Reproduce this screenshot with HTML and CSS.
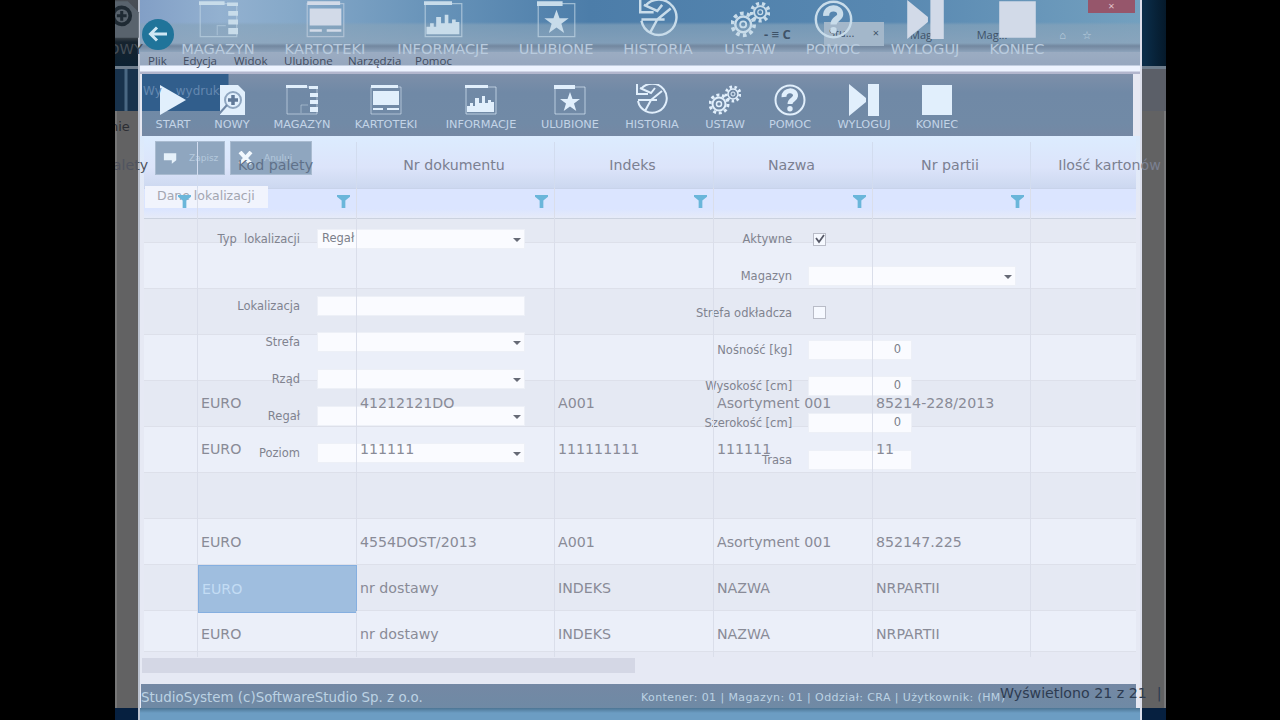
FILE: index.html
```html
<!DOCTYPE html>
<html lang="pl">
<head>
  <meta charset="UTF-8">
  <title>StudioSystem</title>
  <link rel="stylesheet" href="styles.css">
</head>
<body>

<svg class="defs" width="0" height="0">
  <symbol id="start" viewBox="0 0 32 32"><path d="M3 1L29 16L3 31z" fill="currentColor"/></symbol>
  <symbol id="nowy" viewBox="0 0 32 32"><path d="M4 1H22L29 8V31H4z" fill="currentColor"/><circle cx="17" cy="16" r="8" fill="none" stroke="#8fa6c0" stroke-width="2"/><path d="M17 11V21M12 16H22" stroke="#607998" stroke-width="3.500"/><path d="M3 30L11 21" stroke="#7088a6" stroke-width="2"/></symbol>
  <symbol id="nowy-dark" viewBox="0 0 32 32"><path d="M4 1H22L31 10V31H4z" fill="#59636d"/><circle cx="17" cy="13" r="7" fill="none" stroke="#1f2a33" stroke-width="3"/><path d="M17 9V17M13 13H21" stroke="#1f2a33" stroke-width="2.500"/><path d="M2 30L11 20" stroke="#8d969f" stroke-width="2"/></symbol>
  <symbol id="magazyn" viewBox="0 0 32 32"><path d="M1 3H31V30H1z" fill="none" stroke="currentColor" opacity=".55"/><path d="M0 1H21V4H0zM23 2H32V5H23zM24 9H32V13H24zM24 16H32V20H24zM24 23H32V28H24z" fill="currentColor"/><path d="M15 29V21H22" fill="none" stroke="currentColor" opacity=".4"/></symbol>
  <symbol id="kartoteki" viewBox="0 0 32 32"><path d="M1 3H31V30H1z" fill="none" stroke="currentColor" opacity=".55"/><path d="M1 1H28V4H1zM3 7H29V21H3zM3 24H13V26H3zM17 24H29V26H17z" fill="currentColor"/></symbol>
  <symbol id="informacje" viewBox="0 0 32 32"><path d="M1 3H31V30H1z" fill="none" stroke="currentColor" opacity=".65"/><path d="M0 1H23V4H0zM2 28V22H5V19H8V22H10V14H14V19H17V12H20V19H23V16H26V18H29V28z" fill="currentColor"/></symbol>
  <symbol id="ulubione" viewBox="0 0 32 32"><path d="M1 3H31V30H1z" fill="none" stroke="currentColor" opacity=".65"/><path d="M0 1H21V5H0zM16 8L18.500 15H26L20 19.500L22.300 27L16 22.500L9.700 27L12 19.500L6 15H13.500z" fill="currentColor"/></symbol>
  <symbol id="historia" viewBox="0 0 32 32"><path d="M5 5A14.500 14.500 0 1 1 2 17M1 0V10H12M2 16H21M15 16L26 7M15 16L9 27M4 4L15 9L19 4" fill="none" stroke="currentColor" stroke-width="2"/></symbol>
  <symbol id="ustaw" viewBox="0 0 32 32"><g fill="none" stroke="currentColor"><circle cx="10" cy="20" r="9" stroke-width="3" stroke-dasharray="3 2.650"/><circle cx="10" cy="20" r="6.500" stroke-width="2"/><circle cx="10" cy="20" r="2.500" stroke-width="1.500"/><circle cx="24" cy="10" r="7" stroke-width="3" stroke-dasharray="2.500 2.390"/><circle cx="24" cy="10" r="5" stroke-width="1.500"/><circle cx="24" cy="10" r="2"/></g></symbol>
  <symbol id="pomoc" viewBox="0 0 32 32"><circle cx="16" cy="16" r="14.500" fill="none" stroke="currentColor" stroke-width="2"/><path d="M10 13C9.500 5 22 5 21.500 12C21.200 15.500 16 15.500 16 20" fill="none" stroke="currentColor" stroke-width="5"/><circle cx="16" cy="24.800" r="2.700" fill="currentColor"/></symbol>
  <symbol id="wyloguj" viewBox="0 0 32 32"><path d="M1 0L18 14V18L1 32zM20 0H31V32H20z" fill="currentColor"/></symbol>
  <symbol id="koniec" viewBox="0 0 32 32"><path d="M1 1H31V31H1z" fill="currentColor"/></symbol>
  <symbol id="filter" viewBox="0 0 14 14"><path d="M0 0H14V2L9 6V14H5V6L0 2z" fill="currentColor"/></symbol>
</svg>

<div class="screen">

  <!-- tło: okno listy palet -->
  <div class="back">
    <div class="back-top"></div>
    <div class="back-bar"></div>
    <div class="back-body"></div>
    <div class="back-foot"></div>
  </div>

  <!-- okno lokalizacji -->
  <div class="window">
    <div class="titlebar">
      <div class="arrow"><svg width="20" height="16" viewBox="0 0 20 16"><path d="M19 8H3M9 1.500L2.500 8L9 14.500" fill="none" stroke="#cfe7f4" stroke-width="3"/></svg></div>
      <div class="address">- ≡ C</div>
      <div class="tab"><span>Stu...</span><span>×</span></div>
      <div class="tab-next">Mag...</div>
      <div class="tab-next wide">Mag...</div>
      <div class="tools"><span>⌂</span><span>☆</span></div>
      <div class="close">×</div>
    </div>
    <div class="menu">
      <span>Plik</span><span>Edycja</span><span>Widok</span><span>Ulubione</span><span>Narzędzia</span><span>Pomoc</span>
    </div>
    <div class="toolbar">
      <div class="tool"><svg><use href="#start"/></svg>START</div>
      <div class="tool"><svg><use href="#nowy"/></svg>NOWY</div>
      <div class="tool"><svg><use href="#magazyn"/></svg>MAGAZYN</div>
      <div class="tool"><svg><use href="#kartoteki"/></svg>KARTOTEKI</div>
      <div class="tool"><svg><use href="#informacje"/></svg>INFORMACJE</div>
      <div class="tool"><svg><use href="#ulubione"/></svg>ULUBIONE</div>
      <div class="tool"><svg><use href="#historia"/></svg>HISTORIA</div>
      <div class="tool"><svg><use href="#ustaw"/></svg>USTAW</div>
      <div class="tool"><svg><use href="#pomoc"/></svg>POMOC</div>
      <div class="tool"><svg><use href="#wyloguj"/></svg>WYLOGUJ</div>
      <div class="tool"><svg><use href="#koniec"/></svg>KONIEC</div>
    </div>
    <div class="page"></div>
    <div class="status">
      <span class="copy">StudioSystem (c)SoftwareStudio Sp. z o.o.</span>
      <span class="info">Kontener: 01 | Magazyn: 01 | Oddział: CRA | Użytkownik: (HM)</span>
    </div>
    <div class="edge"></div>
  </div>

  <!-- pasy tabeli -->
  <div class="bands">
    <div class="band head"></div>
    <div class="band filters"></div>
    <div class="band r1"></div>
    <div class="band light"></div>
    <div class="band"></div>
    <div class="band light"></div>
    <div class="band"></div>
    <div class="band light"></div>
    <div class="band"></div>
    <div class="band light"></div>
    <div class="band"></div>
    <div class="band light last"></div>
    <div class="scroll"></div>
  </div>

  <!-- formularz -->
  <div class="form">
    <div class="actions">
      <div class="btn"><svg width="15" height="13" viewBox="0 0 17 14"><path d="M1 1H15V9L10 13V9H1z" fill="#e6f1fa"/></svg>Zapisz</div>
      <div class="btn cancel"><svg width="15" height="14" viewBox="0 0 15 14"><path d="M2 1L13 13M13 1L2 13" stroke="#f2f8fd" stroke-width="4"/></svg>Anuluj</div>
    </div>
    <div class="caption">Dane lokalizacji</div>
    <div class="fields">
      <div class="col">
        <div class="row gap"><label>Typ&nbsp; lokalizacji</label><div class="input select">Regał</div></div>
        <div class="row"><label>Lokalizacja</label><div class="input"></div></div>
        <div class="row"><label>Strefa</label><div class="input select"></div></div>
        <div class="row"><label>Rząd</label><div class="input select"></div></div>
        <div class="row"><label>Regał</label><div class="input select"></div></div>
        <div class="row"><label>Poziom</label><div class="input select"></div></div>
      </div>
      <div class="col right">
        <div class="row"><label>Aktywne</label><div class="check"><svg width="10" height="10" viewBox="0 0 10 10"><path d="M1 4L4 8L9 1" fill="none" stroke="#555866" stroke-width="1.800"/></svg></div></div>
        <div class="row"><label>Magazyn</label><div class="input select"></div></div>
        <div class="row"><label>Strefa odkładcza</label><div class="check"></div></div>
        <div class="row"><label>Nośność [kg]</label><div class="input short">0</div></div>
        <div class="row"><label>Wysokość [cm]</label><div class="input short">0</div></div>
        <div class="row"><label>Szerokość [cm]</label><div class="input short">0</div></div>
        <div class="row"><label>Trasa</label><div class="input short"></div></div>
      </div>
    </div>
  </div>

  <!-- lista palet -->
  <div class="list">
    <div class="toolbar big">
      <div class="tool"><svg><use href="#nowy-dark"/></svg>NOWY</div>
      <div class="tool"><svg><use href="#magazyn"/></svg>MAGAZYN</div>
      <div class="tool pale"><svg><use href="#kartoteki"/></svg>KARTOTEKI</div>
      <div class="tool"><svg><use href="#informacje"/></svg>INFORMACJE</div>
      <div class="tool"><svg><use href="#ulubione"/></svg>ULUBIONE</div>
      <div class="tool"><svg><use href="#historia"/></svg>HISTORIA</div>
      <div class="tool"><svg><use href="#ustaw"/></svg>USTAW</div>
      <div class="tool"><svg><use href="#pomoc"/></svg>POMOC</div>
      <div class="tool pale"><svg><use href="#wyloguj"/></svg>WYLOGUJ</div>
      <div class="tool pale"><svg><use href="#koniec"/></svg>KONIEC</div>
    </div>
    <div class="subbar"><span>Wy</span><span>wydruk</span></div>
    <div class="subtitle">nie</div>
    <div class="grid names">
      <div>palety</div><div>Kod palety</div><div>Nr dokumentu</div><div>Indeks</div><div>Nazwa</div><div>Nr partii</div><div>Ilość kartonów</div>
    </div>
    <div class="grid icons">
      <div><svg><use href="#filter"/></svg></div><div><svg><use href="#filter"/></svg></div><div><svg><use href="#filter"/></svg></div><div><svg><use href="#filter"/></svg></div><div><svg><use href="#filter"/></svg></div><div><svg><use href="#filter"/></svg></div><div></div>
    </div>
    <div class="grid empty"><div></div><div></div><div></div><div></div><div></div><div></div><div></div></div>
    <div class="grid"><div></div><div>EURO</div><div>41212121DO</div><div>A001</div><div>Asortyment 001</div><div>85214-228/2013</div><div></div></div>
    <div class="grid"><div></div><div>EURO</div><div>111111</div><div>111111111</div><div>111111</div><div>11</div><div></div></div>
    <div class="grid"><div></div><div></div><div></div><div></div><div></div><div></div><div></div></div>
    <div class="grid"><div></div><div>EURO</div><div>4554DOST/2013</div><div>A001</div><div>Asortyment 001</div><div>852147.225</div><div></div></div>
    <div class="grid"><div></div><div class="selected">EURO</div><div>nr dostawy</div><div>INDEKS</div><div>NAZWA</div><div>NRPARTII</div><div></div></div>
    <div class="grid tail"><div></div><div>EURO</div><div>nr dostawy</div><div>INDEKS</div><div>NAZWA</div><div>NRPARTII</div><div></div></div>
    <div class="count"><span>Wyświetlono 21 z 21</span><span>|</span></div>
  </div>

</div>

</body>
</html>
```

FILE: styles.css
```css
* {
  box-sizing: border-box;
}
body {
  margin: 0;
  background: #000;
  font-family: "DejaVu Sans", Verdana, sans-serif;
}
.defs {
  position: absolute;
}
.screen {
  position: relative;
  width: 1280px;
  height: 720px;
  overflow: hidden;
}

/* back window */
.back {
  position: absolute;
  left: 115px;
  top: 0;
  width: 1051px;
  height: 720px;
  display: flex;
  flex-direction: column;
}
.back-top {
  height: 66px;
  background: linear-gradient(90deg, transparent 50%, #0a2c48 50%, #0a2c48 98%, #05192a),
    linear-gradient(180deg, #4a4f56, #454b52 36px, #16232e 42px, #0d2233);
}
.back-bar {
  height: 45px;
  border-top: 3px solid #6f7e8d;
  background: linear-gradient(90deg, #18324c 9px, #4a6883 10px, #4a6883 12px, #18324c 13px, #18324c 50%, #5b5f68 50%);
}
.back-body {
  flex: 1;
  background: #626263;
  border-left: 2px solid #777;
  border-right: 2px solid #77787a;
}
.back-foot {
  height: 12px;
  background: #062040;
}

/* front window */
.window {
  position: absolute;
  left: 138px;
  top: 0;
  width: 1004px;
  height: 720px;
  display: flex;
  flex-direction: column;
  background: #e6e8f2;
  border-left: 2px solid #bcc3d0;
  border-right: 2px solid #dcdfec;
}
.titlebar {
  position: relative;
  display: flex;
  align-items: center;
  height: 52px;
  padding: 16px 0 0 2px;
  font: 11px "Open Sans", sans-serif;
  color: #3e5268;
  background: linear-gradient(180deg, transparent 22px, #86a3baaa 25px, #8ea6bccc 43px, #72879f 46px, #8da3bb 52px),
    linear-gradient(90deg, #829fc6, #93b1d0 8%, #86a9c9 15%, #6692b8 30%, #4c7da9 45%, #5888b1 75%, #73a0bf);
}
.arrow {
  display: flex;
  align-items: center;
  justify-content: center;
  width: 32px;
  height: 31px;
  border-radius: 50%;
  background: #20749a;
}
.address {
  width: 60px;
  margin-left: 590px;
  font-size: 13px;
  font-weight: bold;
}
.tab {
  display: flex;
  justify-content: space-between;
  width: 60px;
  height: 24px;
  padding: 3px 5px;
  background: #a3b7ca;
}
.tab-next {
  margin-left: 26px;
}
.tab-next.wide {
  margin-left: 36px;
}
.tools {
  display: flex;
  gap: 16px;
  margin-left: 52px;
  color: #bdd0df;
}
.close {
  position: absolute;
  right: 5px;
  top: 0;
  width: 47px;
  height: 13px;
  line-height: 11px;
  text-align: center;
  color: #e2c4cc;
  background: #96566b;
}
.menu {
  display: grid;
  grid-template-columns: 35px 51px 50px 64px 67px 60px;
  height: 22px;
  padding: 2px 0 0 8px;
  font: 11.500px/14px "Open Sans", sans-serif;
  color: #424c60;
  background: linear-gradient(180deg, #9bacc2, #96a7bf 13px, #edf3ff 14px, #edf3ff 19px, #b2b6cd 20px);
}
.toolbar {
  display: grid;
  grid-template-columns: 56px 62px 78px 90px 100px 78px 86px 60px 70px 78px 68px;
  height: 62px;
  margin: 0 7px 0 2px;
  padding: 10px 0 0 3px;
  background: linear-gradient(90deg, #315e8c 86px, transparent 87px) 0 0 / 100% 37px no-repeat,
    linear-gradient(180deg, #7d8fa9, #7089a6 30%, #718aa6 80%, #7588a4);
}
.tool {
  display: flex;
  flex-direction: column;
  align-items: center;
  gap: 1px;
  white-space: nowrap;
  font-size: 11.300px;
  line-height: 15px;
  color: #c3d4e7;
}
.tool svg {
  width: 32px;
  height: 32px;
  flex: none;
  color: #e1effc;
}
.page {
  flex: 1;
  background: linear-gradient(180deg, #dceafc, #e6e9f4 70px);
}
.status {
  display: flex;
  height: 24px;
  margin: 0 4px 0 1px;
  line-height: 28px;
  white-space: nowrap;
  color: #bcd2e3;
  background: linear-gradient(180deg, #7488a4, #6f8aa5);
}
.status .copy {
  width: 500px;
  font-size: 13.400px;
}
.status .info {
  font-size: 11px;
  letter-spacing: 0.4px;
}
.edge {
  height: 12px;
  background: linear-gradient(180deg, #4c7594, #6c9dc3 5px);
}

/* table stripes */
.bands {
  position: absolute;
  left: 144px;
  top: 136px;
  width: 992px;
  height: 548px;
  display: flex;
  flex-direction: column;
}
.band {
  height: 46px;
  background: #e5e9f3;
  border-bottom: 1px solid #dde0ea;
}
.band.light {
  background: #ebeff9;
}
.band.head {
  height: 53px;
  background: linear-gradient(180deg, #dcecff, #dce4fa 60%, #ccd8f0);
  border-bottom-color: #c8d3ea;
}
.band.filters {
  height: 30px;
  background: linear-gradient(180deg, #dbe5ff 20px, #e6ebf8);
  border-bottom-color: #cbd2df;
}
.band.r1 {
  height: 24px;
}
.band.last {
  height: 41px;
}
.scroll {
  width: 493px;
  height: 15px;
  margin: 6px 0 0 -2px;
  background: #d4d7e5;
}

/* form */
.form {
  position: absolute;
  left: 145px;
  top: 136px;
  width: 990px;
}
.actions {
  display: flex;
  gap: 5px;
  padding: 5px 0 0 10px;
}
.btn {
  display: flex;
  align-items: center;
  gap: 11px;
  width: 70px;
  height: 34px;
  padding: 0 0 0 7px;
  font-size: 9px;
  color: #b5c9dd;
  background: #8fa6bf;
  border: 1px solid #a9bbd0;
}
.btn.cancel {
  width: 82px;
}
.caption {
  width: 123px;
  height: 22px;
  margin-top: 11px;
  padding-left: 12px;
  font-size: 12.500px;
  line-height: 19px;
  white-space: nowrap;
  color: #a3a6b1;
  background: #f1f4fd;
}
.fields {
  display: flex;
  padding-top: 13px;
}
.col {
  width: 392px;
}
.col.right {
  width: 500px;
  margin-left: 100px;
}
.row {
  display: flex;
  align-items: center;
  height: 36.750px;
}
.row.gap {
  margin-bottom: 29.500px;
}
.row label {
  width: 155px;
  margin-right: 17px;
  text-align: right;
  font-size: 11.500px;
  white-space: nowrap;
  color: #80838f;
}
.col.right label {
  width: 156px;
  margin-right: 16px;
}
.input {
  position: relative;
  width: 208px;
  height: 20px;
  padding: 0 4px;
  font-size: 11.500px;
  line-height: 17px;
  color: #7b7f8a;
  background: #fafbff;
  border: 1px solid #edf0f7;
}
.input.short {
  width: 104px;
  padding-right: 10px;
  text-align: right;
}
.select::after {
  content: "";
  position: absolute;
  right: 3px;
  top: 8px;
  border: 4px solid transparent;
  border-top-color: #666a76;
  border-bottom: 0;
}
.check {
  display: flex;
  align-items: center;
  justify-content: center;
  width: 13px;
  height: 13px;
  margin-left: 5px;
  background: #f6f9ff;
  border: 1px solid #b9bcc7;
}

/* pallet list */
.list {
  position: absolute;
  left: 115px;
  top: 0;
  width: 1051px;
  height: 720px;
  overflow: hidden;
}
.toolbar.big {
  grid-template-columns: 92px 104px 110px 126px 100px 104px 80px 86px 98px 86px;
  height: 66px;
  margin: 0 0 0 -41px;
  padding: 0;
  background: none;
}
.big .tool {
  font-size: 14.600px;
  line-height: 17px;
  color: #b9cbde;
}
.big .tool svg {
  width: 39px;
  height: 39px;
  color: #c8dcea;
}
.big .pale svg {
  color: #d2dae8;
}
.big .tool:first-child {
  color: #454e57;
}
.subbar {
  display: flex;
  gap: 14px;
  height: 46px;
  padding: 18px 0 0 28px;
  font-size: 12px;
  color: #6488b0;
}
.subtitle {
  height: 30px;
  padding-top: 7px;
  margin-left: -5px;
  font-size: 13px;
  color: #2c2e33;
}
.grid {
  display: grid;
  grid-template-columns: 83px 159px 198px 159px 159px 158px 160px;
  height: 46.300px;
  font-size: 14.200px;
  line-height: 46px;
  white-space: nowrap;
  color: #898b97;
}
.grid > div {
  padding-left: 3px;
  border-right: 1px solid #dadeea;
}
.grid > div:last-child {
  border: 0;
}
.grid.names {
  height: 46px;
  text-align: center;
  color: #7b8091;
}
.names > div {
  padding: 0 3px 0 0;
  border-color: #d2dcef;
}
.names > div:first-child {
  margin-left: -57px;
  color: #505460;
}
.names > div:nth-child(2) {
  color: #5f7189;
}
.grid.icons {
  height: 31px;
}
.icons > div {
  display: flex;
  align-items: center;
  justify-content: flex-end;
  padding: 0 6px 5px 0;
}
.icons svg {
  width: 13px;
  height: 13px;
  color: #6ab6da;
}
.grid.empty {
  height: 161px;
}
.grid > .selected {
  color: #c3dcf4;
  background: #9fbedf;
  border: 1px solid #85afe0;
}
.grid.tail {
  height: 40px;
}
.count {
  display: flex;
  gap: 10px;
  margin: 25px 0 0 885px;
  font-size: 14.200px;
  line-height: 34px;
  white-space: nowrap;
  color: #2d3b51;
}
```
